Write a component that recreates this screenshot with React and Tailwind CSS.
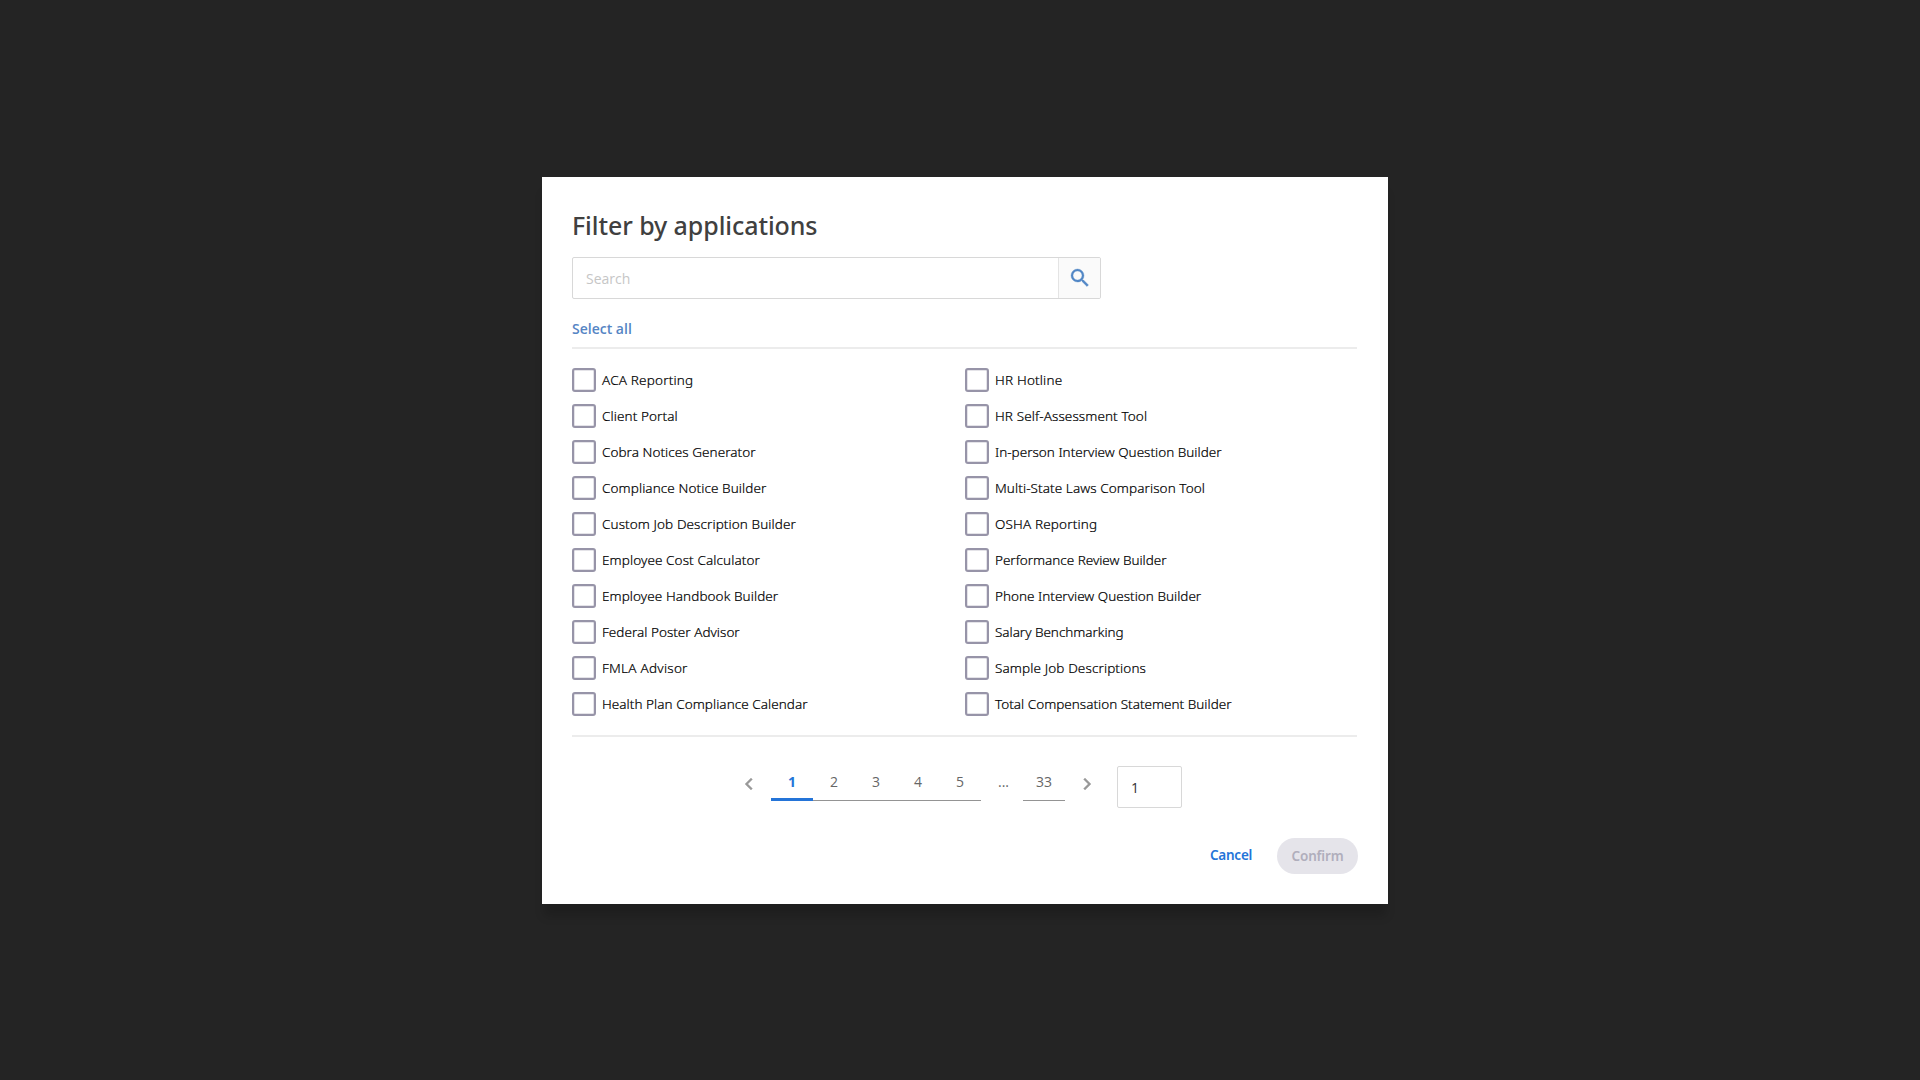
const left = [
  ["ACA Reporting", "tracking-[0.19px]"],
  ["Client Portal", "tracking-[0.1px]"],
  ["Cobra Notices Generator", "tracking-[0.05px]"],
  ["Compliance Notice Builder", "tracking-[0.09px]"],
  ["Custom Job Description Builder", "tracking-[0.09px]"],
  ["Employee Cost Calculator", "tracking-[0.1px]"],
  ["Employee Handbook Builder", "tracking-[0.08px]"],
  ["Federal Poster Advisor", "tracking-[0.02px]"],
  ["FMLA Advisor", "tracking-[0.25px]"],
  ["Health Plan Compliance Calendar", "tracking-[0.05px]"],
];

const right = [
  ["HR Hotline", "tracking-[0.18px]"],
  ["HR Self-Assessment Tool", "tracking-[0.1px]"],
  ["In-person Interview Question Builder", "tracking-[0.01px]"],
  ["Multi-State Laws Comparison Tool", "tracking-[0.09px]"],
  ["OSHA Reporting", "tracking-[0.15px]"],
  ["Performance Review Builder", "tracking-[-0.02px]"],
  ["Phone Interview Question Builder", "tracking-[0.01px]"],
  ["Salary Benchmarking", "tracking-[-0.03px]"],
  ["Sample Job Descriptions", "tracking-[0.12px]"],
  ["Total Compensation Statement Builder", "tracking-[0.01px]"],
];

const icons = {
  search:
    "M15.5 14h-.79l-.28-.27A6.471 6.471 0 0 0 16 9.5 6.5 6.5 0 1 0 9.5 16c1.61 0 3.09-.59 4.23-1.57l.27.28v.79l5 4.99L20.49 19l-4.99-5zm-6 0C7.01 14 5 11.99 5 9.5S7.01 5 9.5 5 14 7.01 14 9.5 11.99 14 9.5 14z",
  previous: "M15.41 7.41 14 6l-6 6 6 6 1.41-1.41L10.83 12z",
  next: "M10 6 8.59 7.41 13.17 12l-4.58 4.59L10 18l6-6z",
};

function Icon({ name }) {
  return (
    <svg viewBox="0 0 24 24" className="h-6 w-6 shrink-0 fill-current stroke-current stroke-[0.35px]">
      <path d={icons[name]} />
    </svg>
  );
}

function Column({ items }) {
  return (
    <ul className="flex w-[393px] flex-col gap-3">
      {items.map(([label, tracking]) => (
        <li key={label} className="flex h-6 items-center gap-1.5">
          <span className="h-6 w-6 shrink-0 rounded-[3px] border-2 border-[#9794a8] bg-white shadow-[inset_0_0_0_0.5px_#c9c7d2]" />
          <span className={`whitespace-nowrap text-[13.5px] leading-6 font-light text-black [-webkit-text-stroke:0.2px_#000] ${tracking}`}>
            {label}
          </span>
        </li>
      ))}
    </ul>
  );
}

function Page({ label, active }) {
  return (
    <button
      className={
        active
          ? "h-[35px] w-[42px] border-b-3 border-[#2474d8] pb-px text-center text-sm leading-[31px] font-bold text-[#2474d8]"
          : "h-[35px] w-[42px] border-b border-[#949494] pb-[3px] text-center text-sm leading-[31px] text-[#666666]"
      }
    >
      {label}
    </button>
  );
}

export default function App() {
  return (
    <main className="h-screen w-full overflow-hidden bg-[#242424] pt-[177px] pl-[542px] font-['Noto_Sans',sans-serif]">
      <section className="h-[727px] w-[846px] bg-white p-[30px] shadow-[0_14px_9px_-2px_rgba(0,0,0,0.16)]">
        <h1 className="h-9 text-[25px] leading-9 font-medium tracking-[-0.08px] text-[#404040]">
          Filter by applications
        </h1>

        <div className="mt-3.5 flex h-[42px] w-[529px] overflow-hidden rounded-[2px] border border-[#d8d8d8] font-['Open_Sans',sans-serif]">
          <span className="flex-1 pt-px pl-[13px] text-sm leading-10 text-[#c6c6c6]">Search</span>
          <button className="flex w-[42px] items-center justify-start border-l border-[#e4e4e4] bg-[#fafafa] pl-[9px] text-[#5287c6]">
            <Icon name="search" />
          </button>
        </div>

        <button className="mt-5 block h-5 font-['Open_Sans',sans-serif] text-sm leading-5 font-semibold text-[#5585c4]">
          Select all
        </button>
        <hr className="mt-2 h-0.5 w-[785px] border-0 bg-[#ececec]" />

        <div className="mt-[19px] flex">
          <Column items={left} />
          <Column items={right} />
        </div>
        <hr className="mt-[19px] h-0.5 w-[785px] border-0 bg-[#ececec]" />

        <nav className="mt-[29px] flex h-[42px] items-start pl-[155px] font-['Open_Sans',sans-serif]">
          <button className="flex h-9 w-11 items-center justify-center text-[#999999]">
            <Icon name="previous" />
          </button>
          <Page label="1" active />
          <Page label="2" />
          <Page label="3" />
          <Page label="4" />
          <Page label="5" />
          <span className="w-[42px] pl-[3px] text-center text-sm leading-[31px] text-[#666666]">...</span>
          <Page label="33" />
          <button className="flex h-9 w-11 items-center justify-center text-[#999999]">
            <Icon name="next" />
          </button>
          <span className="ml-2 h-[42px] w-[65px] rounded-[2px] border border-[#d8d8d8] pt-px pl-[13px] text-sm leading-10 text-[#333333]">
            1
          </span>
        </nav>

        <footer className="mt-[30px] flex h-9 justify-end">
          <button className="mr-[25px] w-[42px] pb-px text-[13.5px] leading-[35px] font-semibold tracking-[-0.25px] text-[#2474d8]">
            Cancel
          </button>
          <button className="h-9 w-[81px] rounded-full bg-[#e5e4ea] text-[13.5px] leading-9 font-semibold tracking-[-0.2px] text-[#b0aebc]">
            Confirm
          </button>
        </footer>
      </section>
    </main>
  );
}
